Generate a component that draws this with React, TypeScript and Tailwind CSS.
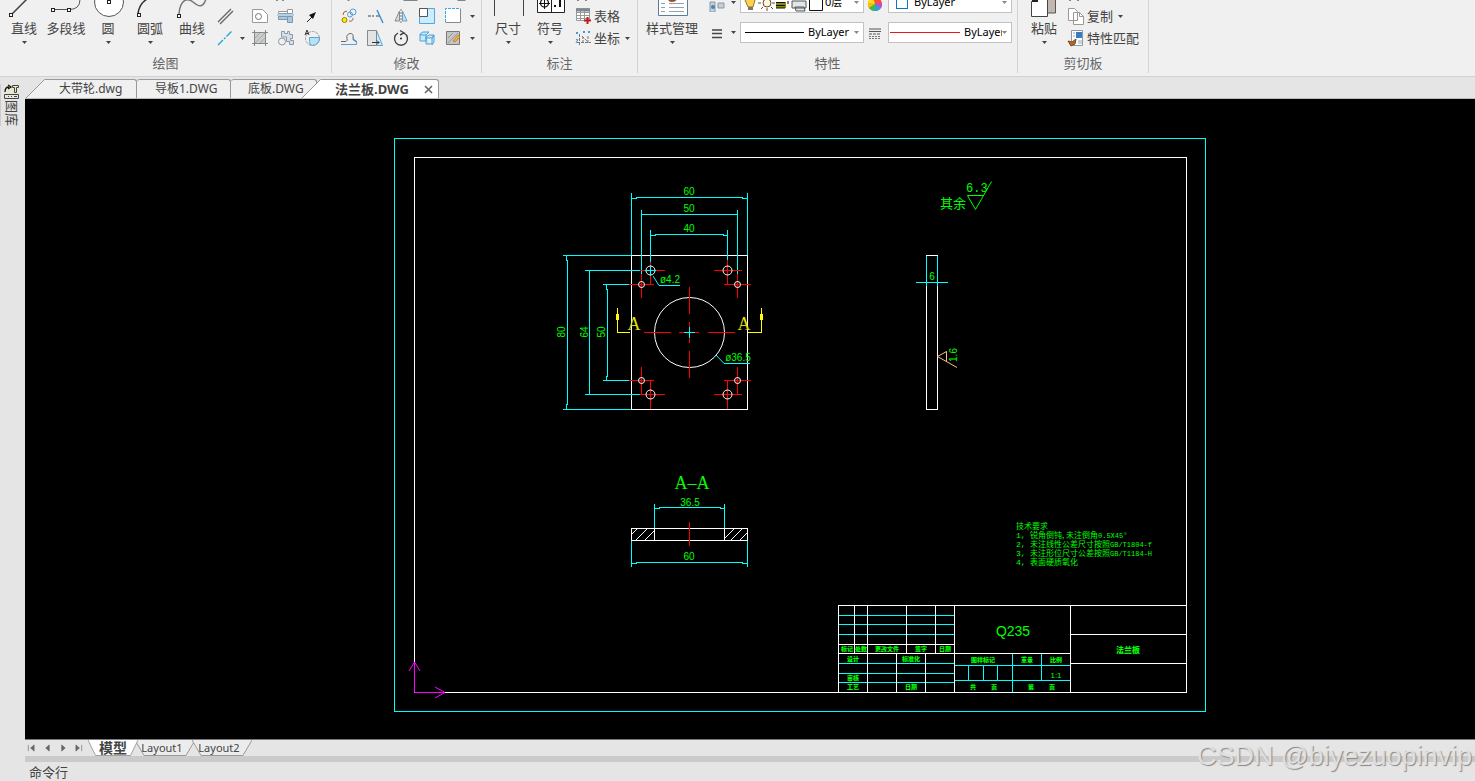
import { useState, type ReactNode } from "react";

const fileTabs = ["大带轮.dwg", "导板1.DWG", "底板.DWG"];

const notes = [
  ["1,", "锐角倒钝, 未注倒角", "0.5X45°"],
  ["2,", "未注线性公差尺寸按照", "GB/T1804-f"],
  ["3,", "未注形位尺寸公差按照", "GB/T1184-H"],
  ["4,", "表面硬质氧化", ""],
] as const;

// x, baseline, text
const titleCells: [number, number, string][] = [
  [847, 651, "标记"],
  [861, 651, "处数"],
  [887, 651, "更改文件"],
  [921, 651, "签字"],
  [945, 651, "日期"],
  [853, 661, "设计"],
  [911, 661, "标准化"],
  [853, 680, "审核"],
  [853, 689, "工艺"],
  [911, 689, "日期"],
  [983, 662, "图样标记"],
  [1027, 662, "重量"],
  [1056, 662, "比例"],
  [973, 689, "共"],
  [994, 689, "页"],
  [1031, 689, "第"],
  [1052, 689, "页"],
];

// x, y, radius, horizontal axis range, vertical axis range
const holes = [
  [650.5, 270.5, 4.5, 640, 665, 262, 285],
  [727.5, 270.5, 4.5, 714, 742, 260, 285],
  [641.5, 284.5, 3, 629, 654, 274, 298],
  [737.5, 284.5, 3, 724, 751, 274, 298],
  [641.5, 380.5, 3, 629, 654, 367, 395],
  [737.5, 380.5, 3, 724, 751, 367, 395],
  [650.5, 394.5, 4.5, 640, 665, 380, 409],
  [727.5, 394.5, 4.5, 714, 742, 380, 409],
];

export default function App() {
  return (
    <div className="relative flex h-screen flex-col overflow-hidden bg-[#e5e5e5] font-['Noto_Sans','Noto_Sans_CJK_SC',sans-serif] text-[13px] text-[#444]">
      <Ribbon />
      <div className="flex min-h-0 flex-1">
        <Sidebar />
        <main className="flex min-w-0 flex-1 flex-col">
          <FileTabs />
          <Drawing />
          <LayoutTabs />
          <div className="h-[6px] shrink-0 bg-[#cacaca]" />
          <div className="h-[19px] shrink-0 pl-1 leading-5">命令行</div>
        </main>
      </div>
      <p className="pointer-events-none absolute right-[3px] bottom-[5px] font-['Liberation_Sans',sans-serif] text-[27px] leading-10 text-[#e8e8e8]/90 [text-shadow:1px_1px_1px_#888]">
        CSDN @biyezuopinvip
      </p>
    </div>
  );
}

function Ribbon() {
  return (
    <header className="flex h-[77px] shrink-0 border-b border-[#d2d2d2] bg-[#f0f0f0] pb-[3px]">
      <Group label="绘图" className="pr-[10px] pl-[3px]">
        <BigButton label="直线">
          <path d="M9 14 28-5" stroke="#444" strokeWidth="1.5" />
          <Node x={6} y={13} />
        </BigButton>
        <BigButton label="多段线" caret={false}>
          <path d="M8 9.500h16q11 0 11-10" stroke="#555" />
          <Node x={6} y={8} />
          <Node x={22} y={8} />
        </BigButton>
        <BigButton label="圆">
          <circle cx="22" cy="2" r="14.500" fill="#fff" stroke="#555" />
          <Node x={20} y={0} />
        </BigButton>
        <BigButton label="圆弧">
          <path d="M9 14Q10 4 18-1" stroke="#333" strokeWidth="1.500" />
          <Node x={8} y={13} />
        </BigButton>
        <BigButton label="曲线">
          <path d="M8 14C9 0 16-3 22 2s10 6 13-3" stroke="#777" strokeWidth="1.500" />
          <Node x={6} y={14} />
        </BigButton>
        <div className="flex w-[108px] flex-col">
          <TopStrip width={108} d="M64 0v1M70 0v1" color="#888" />
          <div className="flex h-[22px] items-center gap-2 pl-[3px]">
            <IconButton label="多线">
              <path d="m2 15 13-13M4 17 17 4" stroke="#666" strokeWidth="1.400" />
            </IconButton>
            <span className="w-[1px]" />
            <IconButton label="区域">
              <path d="M1.500 2.500h10l5 5v8h-15z" fill="#fff" stroke="#999" />
              <circle cx="7.500" cy="9.500" r="3" stroke="#777" />
            </IconButton>
            <IconButton label="螺钉">
              <path d="M1.500 4.500h9v2h-9zM10.500 2.500h5v4h-5z" fill="#fff" stroke="#999" />
              <path d="M1.500 9.500h9v3h-9zM10.500 9.500h5v6h-5z" fill="#a9c8e4" stroke="#7d97ae" />
              <path d="M0 8h17" stroke="#6fb4e6" />
            </IconButton>
            <IconButton label="箭头">
              <path d="m4 15 5-5" stroke="#222" />
              <path d="m13 5-7 3 4 4z" fill="#111" />
            </IconButton>
          </div>
          <div className="flex h-[22px] items-center gap-2 pl-[3px]">
            <IconButton label="中心线">
              <path d="M2 16 16 2" stroke="#1ba6dc" strokeWidth="1.300" strokeDasharray="7 1.500 2 1.500" />
            </IconButton>
            <span className="flex w-[1px] justify-center">
              <Caret />
            </span>
            <IconButton label="填充">
              <path d="M3.500 3.500h11v11h-11zM1 3.500h16M1 14.500h16M3.500 1v16M14.500 1v16" fill="#c9cccd" stroke="#888" />
              <path d="m4 9 5-5M4 14 14 4M9 14l5-5" stroke="#aaa" />
            </IconButton>
            <IconButton label="零件">
              <path d="M4.500 2.500h3v2h3v-2h2v3h3v4h-2v2h3v4h-4v-3h-3V8h-5z" fill="#d7dfe8" stroke="#8b99a5" />
              <circle cx="5" cy="12.500" r="3.500" fill="#f0f0f0" stroke="#8b99a5" />
            </IconButton>
            <IconButton label="局部视图">
              <circle cx="9.500" cy="9.500" r="7" stroke="#999" strokeDasharray="3 1" />
              <path d="M6.500 8.500h10q0 7-7 8-3 0-3-4z" fill="#b5e1f9" stroke="#62a4ca" />
              <path d="m2 6 2-5 2 5M3 4.500h2" stroke="#333" />
            </IconButton>
          </div>
        </div>
      </Group>

      <Group label="修改" className="pr-[6px] pl-2">
        <div className="flex flex-col">
          <TopStrip width={132} d="M7 0v1M62 0h14M116 0h8" color="#7a8791" />
          <div className="flex h-[22px] items-center gap-2">
            <IconButton label="复制">
              <circle cx="4.500" cy="13" r="2.500" fill="#ffeb00" stroke="#94811d" />
              <circle cx="13" cy="5" r="3" fill="#e1f4ff" stroke="#5a9cce" />
              <circle cx="10" cy="7.500" r="2.500" stroke="#5a9cce" />
              <path d="M3 8q0-4 4-4M9 14q4 1 4-3" stroke="#b45a36" />
            </IconButton>
            <IconButton label="延伸">
              <path d="M2 9h3m1 0h2m2 0h4" stroke="#444" />
              <path d="m11 3 6 13" stroke="#338acb" strokeWidth="1.300" />
            </IconButton>
            <IconButton label="镜像">
              <path d="M7.500 4v10H3z" fill="#ddd" stroke="#888" />
              <path d="M10.500 4v10H15z" fill="#bfe1f7" stroke="#68a1c8" />
              <path d="M9 2v14" stroke="#777" strokeDasharray="2 1" />
            </IconButton>
            <IconButton label="缩放">
              <path d="M1.500 1.500h15v15h-15z" fill="#c9efff" stroke="#5aa4d7" />
              <path d="M1.500 1.500h8v8h-8z" fill="#fff" stroke="#555" />
            </IconButton>
            <IconButton label="拉伸">
              <path d="M1.500 1.500h15v14h-15z" fill="#fff" />
              <path d="M1.500 15.500h15v-14" stroke="#888" />
              <path d="M1.500 15V1.500h14" stroke="#35a6e8" strokeDasharray="3 1" />
            </IconButton>
            <Caret />
          </div>
          <div className="flex h-[22px] items-center gap-2">
            <IconButton label="偏移">
              <path d="M1 12.500h5q2-1 1-3-1-4 3-5 4 0 3 4-1 3 3 4" stroke="#666" />
              <path d="M1 15.500h15.500V12q-4-1-3-4" stroke="#5a9cce" />
            </IconButton>
            <IconButton label="倒角">
              <path d="M1.500 1.500h9l6 15h-15z" fill="#c9ebfd" stroke="#5aa4d7" />
              <path d="M1.500 1.500h9v15h-9z" fill="#e3e3e3" stroke="#888" />
              <path d="M6 13.500h7m-2-2 2 2-2 2" stroke="#333" />
            </IconButton>
            <IconButton label="旋转">
              <path d="M6 4a6.500 6.500 0 1 0 6 0M8 1.500l4 2.500-4 2" stroke="#444" strokeWidth="1.400" />
              <circle cx="9" cy="9.500" r="1" fill="#222" />
            </IconButton>
            <IconButton label="阵列">
              <path d="m2 5 3-2h6l-3 3H2zm0 1v6h6V6m0 0 3-3m-3 5 3-2h5l-2 3H8zm0 1v6h6V9l2-3v7l-2 3" fill="#c5eafe" stroke="#4f9fd2" />
            </IconButton>
            <IconButton label="编辑填充">
              <path d="M2.500 2.500h13v13h-13z" fill="#c5c5c5" stroke="#777" />
              <path d="m4 9 5-5M4 14 14 4" stroke="#999" />
              <path d="m9 12 5-6 2 2-5 5z" fill="#f2ac35" stroke="#a96b1c" strokeWidth=".6" />
            </IconButton>
            <Caret />
          </div>
        </div>
      </Group>

      <Group label="标注" className="pr-[7px] pl-[5px]">
        <BigButton label="尺寸">
          <path d="M7.500 0v16M36.500 0v16" stroke="#444" />
        </BigButton>
        <BigButton label="符号">
          <path d="M8.500-1h27v13.500h-27zM22.500 0v12" fill="#fff" stroke="#222" />
          <circle cx="15.500" cy="3" r="4" stroke="#111" strokeWidth="1.300" />
          <path d="M10 3.500h11M15.500 0v9" stroke="#111" />
          <path d="M25 5h2v2h-2zM30 0h2v7h-2z" fill="#111" />
        </BigButton>
        <div className="ml-[3px] flex flex-col">
          <TopStrip width={56} d="M4 0v1M12 0v1" color="#888" />
          <TextButton label="表格">
            <path d="M2.500 1.500h13v12h-13zM2 5.500h14M2 8.500h14M2 11.500h14M6.500 4v10M10.500 4v10" fill="#fff" stroke="#999" />
            <path d="M2 1.500h14v3H2z" fill="#7b8793" />
            <path d="M13.500 10v7M10 13.500h7" stroke="#c5161d" strokeWidth="2" />
          </TextButton>
          <TextButton label="坐标" caret>
            <path d="M5.500 5v12M3 13.500h14M8 7l6 6M9 14V8m5 6V7" stroke="#777" strokeDasharray="3 1" />
            <path d="m2 3 2 2M4 3 2 5M9 2l2 2m0-2L9 4M14 2l2 2m0-2-2 2M2 10l2 2m0-2-2 4" stroke="#479ad0" />
          </TextButton>
        </div>
      </Group>

      <Group label="特性" className="pr-[5px] pl-[7px]">
        <BigButton label="样式管理" wide>
          <path d="M7.500-1h29v16.500h-29z" fill="#fff" stroke="#5d7d96" />
          <path d="M10 3.500h4m-4 4h4m-4 4h4M18 3.500h15M18 7.500h15M18 11.500h15" stroke="#8ea2b4" />
          <path d="M17-1h9q-1 3-5 3t-4-3" fill="#9c511e" />
        </BigButton>
        <div className="flex flex-col justify-end gap-[9px] pb-[9px]">
          <div className="flex h-[21px] items-center">
            <PropertyIcon label="图层" caret>
              <path d="M2 8h5v10H2zM10 9h6v5h-6z" fill="#c6d0d8" stroke="#8998a6" />
              <circle cx="5" cy="13" r="2" fill="#4385bd" />
            </PropertyIcon>
            <Dropdown label="当前图层" value="0层">
              <svg viewBox="0 0 82 21" className="h-[21px] w-[82px] shrink-0" fill="none">
                <path d="M7 14h5v4H7z" fill="#777" />
                <path d="M4 8q5-6 10 0l-2 7H7z" fill="#ffd34b" stroke="#8b7637" />
                <circle cx="26" cy="11" r="4" fill="#fff6dd" stroke="#6b4b28" />
                <path d="M26 5v-3M26 16v3M20 11h-3M31 11h3M22 7l-2-2M30 7l2-2M22 15l-2 2M30 15l2 2" stroke="#6b4b28" />
                <path d="M35 10h10v6H35z" fill="#8a8b00" />
                <path d="M35 10.500h9M35 13.500h9M35 16h9M47 9v3" stroke="#111" />
                <path d="M51 9h14v7H51zM54 15h9l1 4h-9z" fill="#dfe7eb" stroke="#555" />
                <path d="M68.500 4.500h13v14h-13z" fill="#fff" stroke="#111" />
              </svg>
            </Dropdown>
            <PropertyIcon label="颜色">
              <circle cx="9" cy="10" r="7" fill="#ff4d3d" />
              <path d="M9 10 3 14a7 7 0 0 1-1-5z" fill="#ffbf00" />
              <path d="M9 10 3 14a7 7 0 0 0 6 3z" fill="#3dbe45" />
              <path d="M9 10v7a7 7 0 0 0 6-3z" fill="#2b9ee9" />
              <path d="m9 10 6 4a7 7 0 0 0 1-5z" fill="#b451dc" />
              <path d="M9 10 2 9a7 7 0 0 1 5-6z" fill="#fbe11c" />
            </PropertyIcon>
            <Dropdown label="对象颜色" value="ByLayer">
              <span className="mr-1 ml-[7px] size-3 shrink-0 border border-[#0878c8] bg-white" />
            </Dropdown>
          </div>
          <div className="flex h-[21px] items-center">
            <PropertyIcon label="线宽" caret>
              <path d="M4 6h10M4 9.500h10M4 13.500h10" stroke="#444" strokeWidth="1.500" />
            </PropertyIcon>
            <Dropdown label="线型" value="ByLayer">
              <span className="mr-[2px] ml-1 h-px w-[59px] shrink-0 bg-black" />
            </Dropdown>
            <PropertyIcon label="线型管理">
              <path d="M3 5h12M3 7.500h12" stroke="#555" />
              <path d="M3 10h12" stroke="#555" strokeDasharray="3 1" />
              <path d="M3 12.500h12M3 14.500h12" stroke="#777" strokeDasharray="2 1" />
            </PropertyIcon>
            <Dropdown label="线宽样式" value="ByLayer">
              <span className="mr-[2px] ml-px h-px w-[70px] shrink-0 bg-[#f01515]" />
            </Dropdown>
          </div>
        </div>
      </Group>

      <Group label="剪切板" className="pr-[7px] pl-[5px]">
        <BigButton label="粘贴">
          <path d="M23-1h9.500v14H23z" fill="#c1b7ae" stroke="#555" />
          <path d="M8.500 1.500h6V-1h10v17.500h-16z" fill="#fff" stroke="#444" />
          <path d="M9 1h6" stroke="#222" strokeWidth="2" />
        </BigButton>
        <div className="ml-[2px] flex flex-col">
          <TopStrip width={74} d="M3 0v1M11 0v1" color="#888" />
          <TextButton label="复制" caret>
            <path d="M1.500 1.500h6l3 3v9h-9zM6.500 5.500h6l4 4v8h-10z" fill="#fff" stroke="#999" />
            <path d="M12.500 5.500v4h4" stroke="#999" />
          </TextButton>
          <TextButton label="特性匹配">
            <path d="M4.500 1.500h11v15h-11z" fill="#fff" stroke="#8c9aa8" />
            <path d="M9 3h6v6H9z" fill="#3a7dbf" />
            <path d="M6 4h2M6 7h2M11 12h4M11 14h4" stroke="#94a3b2" />
            <path d="m1 12 4 1 4-3-1 5-4 2z" fill="#b46b27" stroke="#7e4a20" />
          </TextButton>
        </div>
      </Group>
    </header>
  );
}

function Group({
  label,
  className,
  children,
}: {
  label: string;
  className: string;
  children: ReactNode;
}) {
  return (
    <section className="flex flex-col border-r border-[#d4d4d4]">
      <div className={`flex h-[52px] shrink-0 overflow-hidden ${className}`}>
        {children}
      </div>
      <h2 className="pt-px text-center leading-5 text-[#666]">{label}</h2>
    </section>
  );
}

function BigButton({
  label,
  caret = true,
  wide = false,
  children,
}: {
  label: string;
  caret?: boolean;
  wide?: boolean;
  children: ReactNode;
}) {
  return (
    <button
      type="button"
      className={`flex flex-col items-center ${wide ? "w-[54px]" : "w-[42px]"}`}
    >
      <svg viewBox="0 0 42 18" className="h-[18px] w-[42px]" fill="none" aria-hidden="true">
        {children}
      </svg>
      <span className="leading-5 whitespace-nowrap">{label}</span>
      {caret ? (
        <span className="mt-[3px]">
          <Caret />
        </span>
      ) : null}
    </button>
  );
}

function IconButton({ label, children }: { label: string; children: ReactNode }) {
  return (
    <button type="button" aria-label={label} className="shrink-0">
      <Icon>{children}</Icon>
    </button>
  );
}

function TextButton({
  label,
  caret = false,
  children,
}: {
  label: string;
  caret?: boolean;
  children: ReactNode;
}) {
  return (
    <button type="button" className="flex h-[22px] items-center gap-[2px]">
      <Icon>{children}</Icon>
      <span className="leading-5 whitespace-nowrap">{label}</span>
      {caret ? (
        <span className="ml-[3px]">
          <Caret />
        </span>
      ) : null}
    </button>
  );
}

function PropertyIcon({
  label,
  caret = false,
  children,
}: {
  label: string;
  caret?: boolean;
  children: ReactNode;
}) {
  return (
    <button
      type="button"
      aria-label={label}
      className={`flex items-center ${caret ? "w-[41px] gap-[5px] pl-[9px]" : "w-6 pl-[2px]"}`}
    >
      <Icon>{children}</Icon>
      {caret ? <Caret /> : null}
    </button>
  );
}

function Dropdown({
  label,
  value,
  children,
}: {
  label: string;
  value: string;
  children: ReactNode;
}) {
  return (
    <label className="flex h-[21px] w-[124px] items-center border border-[#c2c2c2] bg-white pr-1 text-black">
      {children}
      <select
        aria-label={label}
        className="min-w-0 flex-1 appearance-none bg-transparent pl-[2px] text-[11px] text-black outline-none"
      >
        <option>{value}</option>
      </select>
      <Caret muted />
    </label>
  );
}

function Icon({ children }: { children: ReactNode }) {
  return (
    <svg viewBox="0 0 18 18" className="size-[18px] shrink-0" fill="none" aria-hidden="true">
      {children}
    </svg>
  );
}

function Caret({ muted = false }: { muted?: boolean }) {
  return (
    <svg viewBox="0 0 5 3" className="h-[3px] w-[5px] shrink-0" aria-hidden="true">
      <path d="M0 0h5L2.500 3z" fill={muted ? "#888" : "#444"} />
    </svg>
  );
}

function Node({ x, y }: { x: number; y: number }) {
  return (
    <rect x={x + 0.5} y={y + 0.5} width="3" height="3" fill="#fff" stroke="#222" />
  );
}

// Lower edge of the icon row that is scrolled out of the ribbon
function TopStrip({ width, d, color }: { width: number; d: string; color: string }) {
  return (
    <svg viewBox={`0 0 ${width} 5`} className="h-[5px] w-full shrink-0" fill="none" aria-hidden="true">
      <path d={d} stroke={color} strokeWidth="2" />
    </svg>
  );
}

function Sidebar() {
  return (
    <aside className="w-[25px] shrink-0 pt-[7px]">
      <button
        type="button"
        className="flex flex-col items-center border-l border-[#ccc] pl-[3px]"
      >
        <svg viewBox="0 0 16 16" className="size-4" fill="none" aria-hidden="true">
          <path d="M1 1h14v9H1z" fill="#e8e8d0" />
          <path d="M1 8q0-5 4-5M4 1l3 2-3 2" stroke="#111" strokeWidth="1.300" />
          <path d="M8.500 1.500h6v2h-2v5h-2v-5h-2zM.5 10.500h14v4H.5zM4 12.500h1m2 0h1m2 0h3" stroke="#444" />
        </svg>
        <span className="text-[13px] leading-4 [text-orientation:sideways] [writing-mode:vertical-rl]">
          图库
        </span>
      </button>
    </aside>
  );
}

function FileTabs() {
  return (
    <nav className="flex h-[22px] shrink-0 items-end border-b border-[#bbb] pl-px text-xs">
      <TabSlant fill="#f0f0f0" />
      {fileTabs.map((name, index) => (
        <button
          key={name}
          type="button"
          className={`h-[19px] rounded-t-[3px] border-t border-r border-[#999] bg-[#f0f0f0] text-left leading-[18px] whitespace-nowrap ${
            index === 0
              ? "w-[91px] rounded-tl-none pl-[13px]"
              : index === 1
                ? "w-[94px] pl-[18px]"
                : "w-[86px] pl-[17px]"
          }`}
        >
          {name}
        </button>
      ))}
      <div className="relative -ml-[15px] flex items-end">
        <TabSlant fill="#fff" />
        <div className="flex h-[19px] w-[117px] items-center justify-between rounded-tr-[3px] border-t border-r border-[#999] bg-white pr-[5px] pl-[13px]">
          <button type="button" className="text-[13px] leading-4 font-bold whitespace-nowrap">
            法兰板.DWG
          </button>
          <button type="button" aria-label="关闭">
            <svg viewBox="0 0 9 9" className="size-[9px]" fill="none">
              <path d="m1 1 7 7M8 1 1 8" stroke="#666" strokeWidth="1.600" />
            </svg>
          </button>
        </div>
      </div>
    </nav>
  );
}

function TabSlant({ fill }: { fill: string }) {
  return (
    <svg viewBox="0 0 20 19" className="h-[19px] w-5 shrink-0" aria-hidden="true">
      <path d="M0 19 18.500.5H20V19z" fill={fill} />
      <path d="M0 19 18.500.5H20" fill="none" stroke="#999" />
    </svg>
  );
}

const controls = [
  ["第一个", "M1.500 1v7M8 1v7L4 4.500z"],
  ["上一个", "M7 1v7L3 4.500z"],
  ["下一个", "M3 1v7l4-3.500z"],
  ["最后一个", "M7.500 1v7M1 1v7l4-3.500z"],
] as const;

function LayoutTabs() {
  const [active, setActive] = useState("模型");

  return (
    <nav className="flex h-[17px] shrink-0 items-start border-t border-[#777] pl-[2px] text-[11px]">
      <div className="mr-[5px] flex h-4 items-center gap-2">
        {controls.map(([label, d]) => (
          <button key={label} type="button" aria-label={label}>
            <svg viewBox="0 0 9 9" className="size-[8px]">
              <path d={d} fill="#666" stroke="#666" strokeWidth=".7" />
            </svg>
          </button>
        ))}
      </div>
      {["模型", "Layout1", "Layout2"].map((name) => (
        <button
          key={name}
          type="button"
          onClick={() => setActive(name)}
          className={`relative -mr-[3px] h-4 ${name === "模型" ? "w-[50px]" : "w-[60px] pr-[6px]"} ${
            active === name ? "z-10 text-sm font-bold" : ""
          }`}
        >
          <svg
            viewBox="0 0 60 16"
            preserveAspectRatio="none"
            className="absolute inset-0 h-full w-full"
            aria-hidden="true"
          >
            <path
              d="M0 0 9 15.500H51L60 0"
              fill={active === name ? "#fff" : "#ececec"}
              stroke="#999"
            />
          </svg>
          <span className="relative block leading-3">{name}</span>
        </button>
      ))}
    </nav>
  );
}

function Drawing() {
  return (
    <svg
      viewBox="25 99 1450 640"
      className="min-h-0 w-full flex-1 bg-black font-['Liberation_Sans','Noto_Sans_CJK_SC',sans-serif]"
      fill="none"
      role="img"
      aria-label="法兰板"
    >
      <g shapeRendering="crispEdges">
        <path d="M394.500 138.500h811v573h-811z" stroke="#0ff" />
        <path d="M414.500 157.500h772v535h-772z" stroke="#fff" />
      </g>
      <PlanView />
      <SideView />
      <SectionView />
      <Notes />
      <TitleBlock />
      <path d="M414.500 662v30.500h30M409 671l5.500-9 5.500 9M435 687l10 5.500-10 5.500" stroke="#f0f" />
    </svg>
  );
}

function PlanView() {
  return (
    <g>
      <g shapeRendering="crispEdges">
        <path d="M631.500 255.500h116v154h-116z" stroke="#fff" />
        <path
          d="M631.500 193v62M747.500 193v62M631 198.500h5v-1h106v1h5M641.500 210v64M737.500 210v64M641 214.500h96M650.500 230v34M727.500 230v30M650 235.500h5v-1h68v1h5"
          stroke="#0ff"
        />
        <path
          d="M563 255.500h68M563 409.500h68M566.500 255v5h1v144h-1v5M585 270.500h56M585 394.500h56M589.500 270v124M603 284.500h27M603 380.500h27M606.500 284v5h1v87h-1v5"
          stroke="#0ff"
        />
      </g>
      {holes.map(([x, y, r, x1, x2, y1, y2]) => (
        <g key={`${x}-${y}`}>
          <path d={`M${x1} ${y}H${x2}M${x} ${y1}V${y2}`} stroke="#f00" shapeRendering="crispEdges" />
          <circle cx={x} cy={y} r={r} stroke="#fff" />
        </g>
      ))}
      <circle cx="689.500" cy="332.500" r="35" stroke="#fff" />
      <g shapeRendering="crispEdges">
        <path
          d="M644 332.500h27M679 332.500h20M708 332.500h27M689.500 287v27M689.500 322v21M689.500 351v27"
          stroke="#f00"
        />
        <path d="M684 332.500h11M689.500 327v11M645 270.500h11M650.500 265v11" stroke="#0ff" />
        <path d="M617.500 308v24.500H630M761.500 308v24.500H748" stroke="#ff0" />
        <path d="M616 314h3v6h-3zM760 314h3v6h-3z" fill="#ff0" />
      </g>
      <path d="m653 276 6 9.500h21M716 355l8 8.500h26" stroke="#0ff" />
      <g fill="#0f0" fontSize="10" textAnchor="middle">
        <text x="689" y="195">60</text>
        <text x="689" y="212">50</text>
        <text x="689" y="232">40</text>
        <text x="670" y="283">ø4.2</text>
        <text x="738" y="361">ø36.5</text>
        <text transform="translate(565 332) rotate(-90)">80</text>
        <text transform="translate(588 332) rotate(-90)">64</text>
        <text transform="translate(605 332) rotate(-90)">50</text>
      </g>
      <g fill="#dfdf00" fontSize="18" textAnchor="middle" className="font-['Liberation_Serif',serif]">
        <text x="634" y="330">A</text>
        <text x="744" y="330">A</text>
      </g>
    </g>
  );
}

function SideView() {
  return (
    <g>
      <g shapeRendering="crispEdges">
        <path d="M926.500 255.500h11v154h-11z" stroke="#fff" />
        <path d="M926.500 256v30M937.500 256v30M916 282.500h32" stroke="#0ff" />
      </g>
      <path d="M957 367.500 937.500 356.500l9-5v10" stroke="#ffbf7f" />
      <path d="m991.500 181.500-16 28-8-14H984" stroke="#0f0" />
      <g fill="#0f0">
        <text x="932" y="280" fontSize="10" textAnchor="middle">6</text>
        <text fontSize="10" textAnchor="middle" transform="translate(957 355) rotate(-90)">1.6</text>
        <text x="966" y="192" fontSize="12" className="font-['Liberation_Mono',monospace]">6.3</text>
        <text x="940" y="208" fontSize="13">其余</text>
      </g>
    </g>
  );
}

function SectionView() {
  return (
    <g>
      <path
        d="m632 534 5-5M636 540l11-11M645 540l9-9M725 538l9-9M731 540l11-11M740 540l7-7"
        stroke="#fff"
      />
      <g shapeRendering="crispEdges">
        <path d="M631.500 528.500h116v12h-116zM654.500 528v12M724.500 528v12" stroke="#fff" />
        <path
          d="M654.500 504v24M724.500 504v24M654 508.500h5v-1h61v1h5M631.500 541v26M747.500 541v26M631 563.500h5v-1h106v1h5"
          stroke="#0ff"
        />
        <path d="M689.500 522v24" stroke="#f00" />
      </g>
      <g fill="#0f0" textAnchor="middle">
        <text x="692" y="489" fontSize="18" className="font-['Liberation_Serif',serif]">A–A</text>
        <text x="690" y="506" fontSize="10">36.5</text>
        <text x="689" y="560" fontSize="10">60</text>
      </g>
    </g>
  );
}

function Notes() {
  return (
    <g fill="#0f0" fontSize="8" className="font-['Noto_Sans_CJK_SC',sans-serif]">
      <text x="1016" y="529">技术要求</text>
      {notes.map(([mark, text, standard], index) => (
        <g key={mark}>
          <text x="1016" y={538 + index * 9} className="font-['Liberation_Mono',monospace]">
            {mark}
          </text>
          <text x="1030" y={538 + index * 9}>
            {text}
            <tspan fontSize="7" className="font-['Liberation_Mono',monospace]">
              {standard}
            </tspan>
          </text>
        </g>
      ))}
    </g>
  );
}

function TitleBlock() {
  return (
    <g>
      <g shapeRendering="crispEdges">
        <path
          d="M838 615.500h116M838 624.500h116M838 634.500h116M838 663.500h116M838 673.500h116M838 682.500h116M954 665.500h116M954 680.500h116M1012.500 653v39M1041.500 653v27M968.500 665v15M983.500 665v15M997.500 665v15"
          stroke="#0ff"
        />
        <path
          d="M838.500 692V605.500h348M838 644.500h116M838 653.500h232M854.500 605v48M867.500 605v87M906.500 605v48M935.500 605v48M896.500 653v39M925.500 653v39M954.500 605v87M1070.500 605v87M1070 634.500h116M1070 663.500h116"
          stroke="#fff"
        />
      </g>
      <g fill="#0f0" textAnchor="middle">
        <text x="1013" y="636" fontSize="14">Q235</text>
        <text x="1056" y="678" fontSize="8">1:1</text>
        <text x="1128" y="653" fontSize="8" fontWeight="900">法兰板</text>
        <g fontSize="6" fontWeight="900">
          {titleCells.map(([x, y, text]) => (
            <text key={`${x}-${y}`} x={x} y={y}>
              {text}
            </text>
          ))}
        </g>
      </g>
    </g>
  );
}
